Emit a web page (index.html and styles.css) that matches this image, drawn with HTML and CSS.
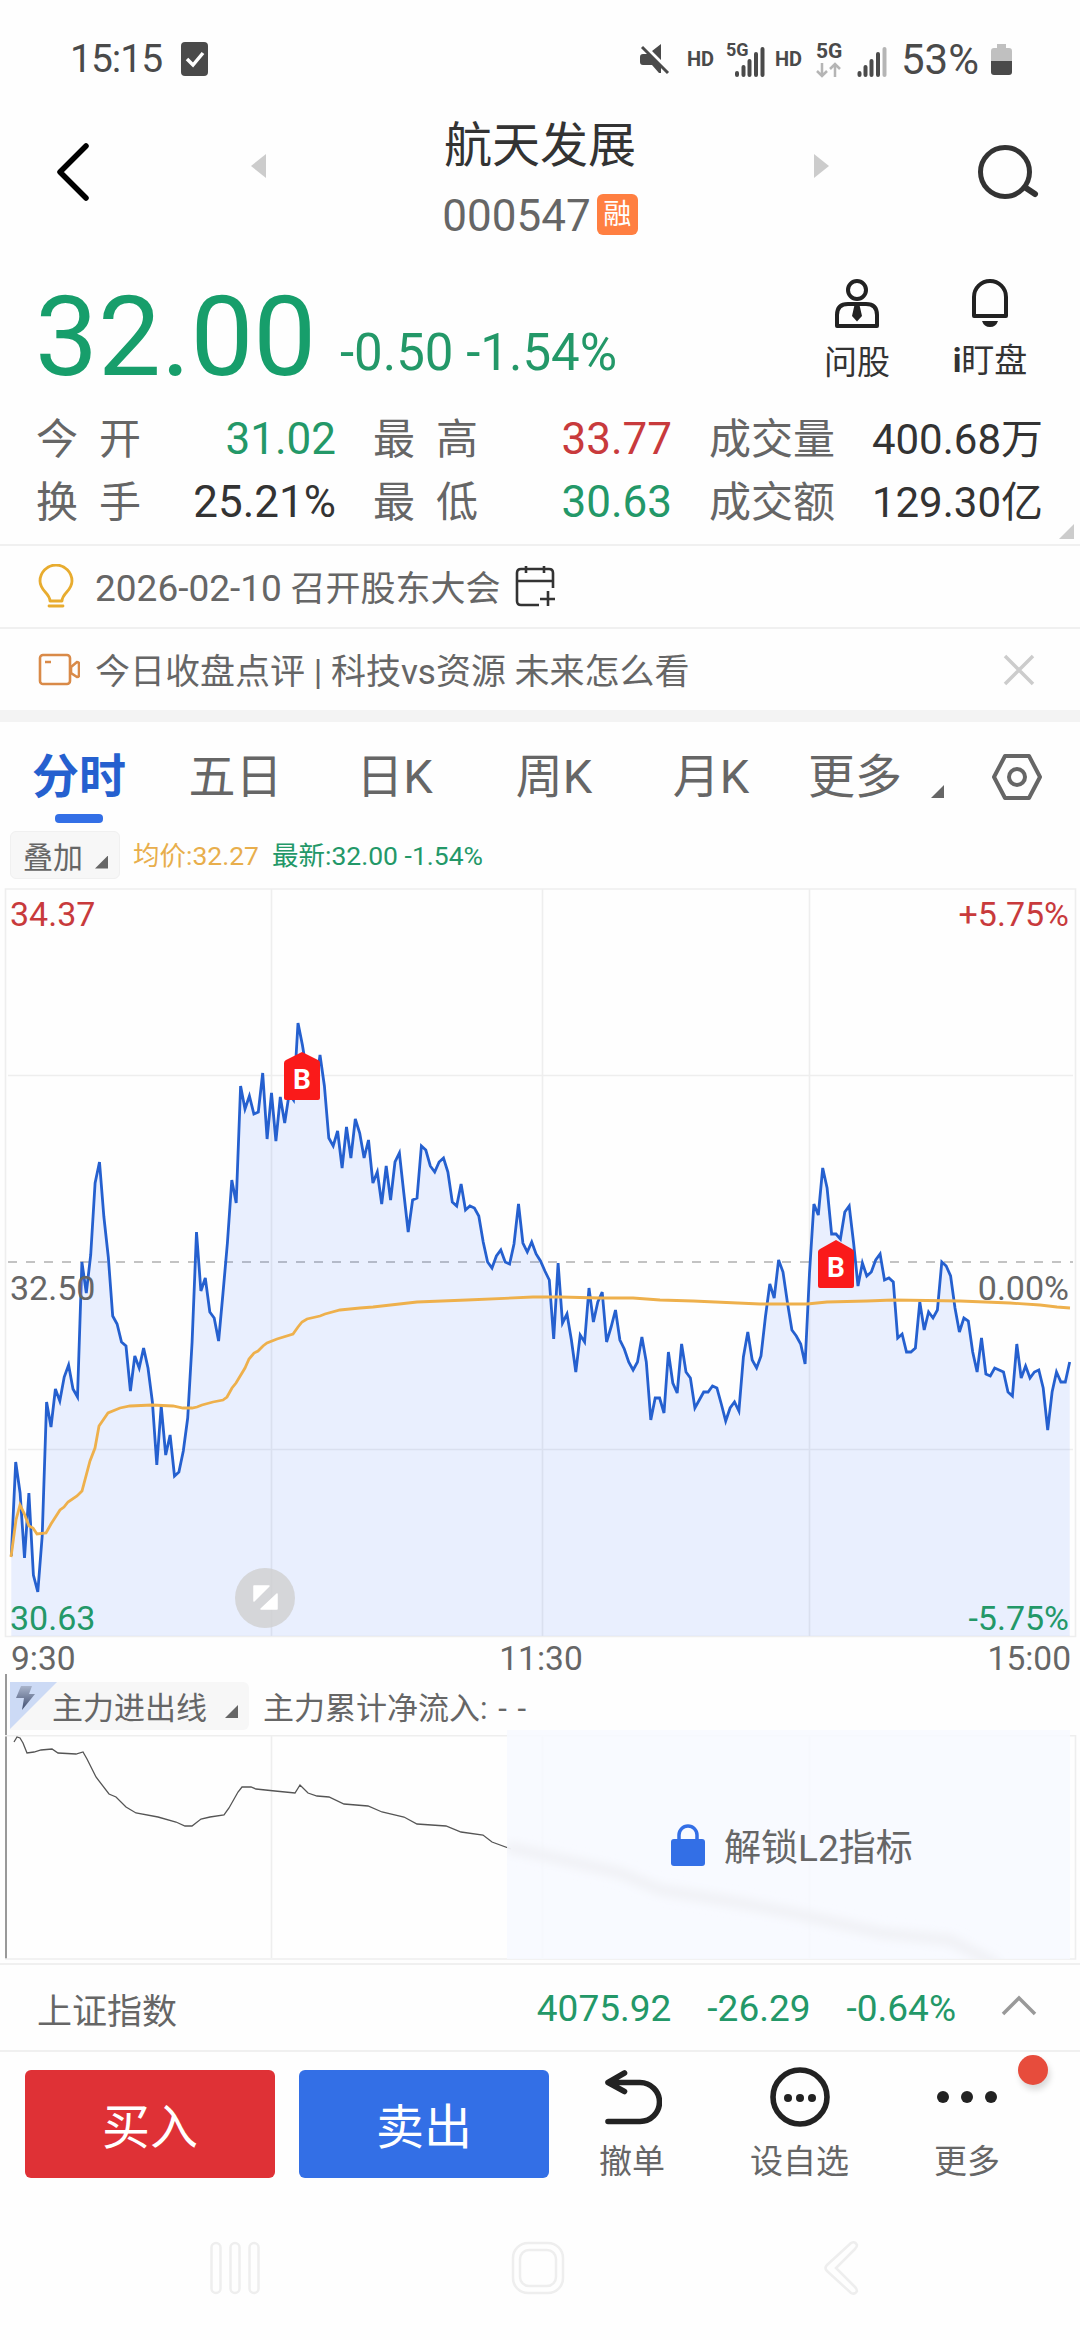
FILE: index.html
```html
<!DOCTYPE html>
<html lang="zh-CN">
<head>
    <meta charset="UTF-8">
    <meta name="viewport" content="width=device-width, initial-scale=1.0">
    <title>航天发展 000547</title>
    <link rel="stylesheet" href="styles.css">
</head>
<body>
    <div class="status-bar">
        <span class="clock">15:15</span>
        <svg class="task-icon" width="27" height="34" viewBox="0 0 27 34"><rect width="27" height="34" rx="4" fill="#4a4a4a"/><path d="M6 17l6 6 10-12" fill="none" stroke="#fff" stroke-width="3.500"/></svg>
        <svg class="status-icons" width="270" height="44" viewBox="636 36 270 44">
            <path d="M641 56q0-3 3-3h6l2 1 10 10v8h-2l-7-8h-9q-3 0-3-3zM653 50l9-7v16z" fill="#4a4a4a"/>
            <path d="M643 46l26 26" stroke="#4a4a4a" stroke-width="3"/>
            <text x="688" y="65" class="hd">HD</text>
            <text x="727" y="55" class="g-small">5G</text>
            <path d="M738 72v2M744.500 66v8M750.500 60v14M757 53v21M763.500 48v26" stroke="#4a4a4a" stroke-width="4" stroke-linecap="round"/>
            <text x="776" y="65" class="hd">HD</text>
            <text x="817" y="57" class="g-big">5G</text>
            <path d="M823 62v13M818 70l5 5 5-5M836 76V63M831 68l5-5 5 5" fill="none" stroke="#b5b5b5" stroke-width="2.500"/>
            <path d="M860.500 72v2M866.500 66v8M872.500 60v14M879 53v21" stroke="#4a4a4a" stroke-width="4" stroke-linecap="round"/>
            <path d="M885.500 48v26" stroke="#b5b5b5" stroke-width="4" stroke-linecap="round"/>
        </svg>
        <span class="battery-text">53%</span>
        <svg width="21" height="31" viewBox="0 0 21 31"><path d="M6 0h9v4h3q3 0 3 3v10H0V7q0-3 3-3h3z" fill="#c0c0c0"/><path d="M0 17h21v11q0 3-3 3H3q-3 0-3-3z" fill="#4a4a4a"/></svg>
    </div>

    <div class="header">
        <svg class="back" width="36" height="60" viewBox="0 0 36 60"><path d="M31 4L5 30l26 26" fill="none" stroke="#000" stroke-width="5.500" stroke-linecap="round" stroke-linejoin="round"/></svg>
        <span class="arrow-left"></span>
        <div class="stock">
            <div class="stock-name">航天发展</div>
            <div class="stock-code">000547<span class="badge">融</span></div>
        </div>
        <span class="arrow-right"></span>
        <svg class="search" width="64" height="60" viewBox="0 0 64 60"><circle cx="29" cy="30" r="24.500" fill="none" stroke="#333" stroke-width="5"/><path d="M50 46l9 6" stroke="#333" stroke-width="6" stroke-linecap="round"/></svg>
    </div>

    <div class="quote">
        <div class="price-row">
            <div class="price">32.00</div>
            <div class="change">-0.50 -1.54%</div>
            <div class="tool ask">
                <svg width="48" height="50" viewBox="0 0 48 50"><circle cx="24" cy="11" r="9" fill="none" stroke="#222" stroke-width="4"/><path d="M3 47V36q0-11 11-11h18q11 0 11 11v11z" transform="translate(1 0)" fill="none" stroke="#222" stroke-width="4" stroke-linejoin="round"/><path d="M21.500 26h5l2.500 11-5 5.500-5-5.500z" fill="#222"/></svg>
                <span>问股</span>
            </div>
            <div class="tool watch">
                <svg width="40" height="50" viewBox="0 0 40 50"><path d="M4 37V18a16 16 0 0 1 32 0v19z" fill="none" stroke="#222" stroke-width="4" stroke-linejoin="round"/><path d="M12 42h16q-2 6-8 6t-8-6z" fill="#222"/></svg>
                <span><b>i</b>盯盘</span>
            </div>
        </div>
        <div class="stats">
            <div class="stat"><span class="label wide">今开</span><span class="green">31.02</span></div>
            <div class="stat"><span class="label wide">最高</span><span class="red">33.77</span></div>
            <div class="stat"><span class="label">成交量</span><span class="amount">400.68万</span></div>
            <div class="stat"><span class="label wide">换手</span><span>25.21%</span></div>
            <div class="stat"><span class="label wide">最低</span><span class="green">30.63</span></div>
            <div class="stat"><span class="label">成交额</span><span class="amount">129.30亿</span></div>
        </div>
        <span class="corner"></span>
    </div>

    <div class="notice">
        <svg width="40" height="46" viewBox="0 0 40 46"><path d="M13 37c0-8-10-10-10-20a15 15 0 0 1 32 0c0 10-10 12-10 20zM12 42h14" transform="translate(-1 0)" fill="none" stroke="#e8ac2f" stroke-width="2.800" stroke-linecap="round" stroke-linejoin="round"/></svg>
        <span class="notice-text"><span class="date">2026-02-10</span> 召开股东大会</span>
        <svg class="calendar" width="42" height="44" viewBox="0 0 42 44"><path d="M24 40H6q-4 0-4-4V8q0-4 4-4h28q4 0 4 4v15M2 16h36M11 1v7M29 1v7M33 26v15M25 34h15" fill="none" stroke="#333" stroke-width="2.600"/></svg>
    </div>
    <div class="notice news">
        <svg width="42" height="34" viewBox="0 0 42 34"><rect x="2" y="2" width="30" height="29" rx="3" fill="none" stroke="#d98a48" stroke-width="2.600"/><path d="M7 9h6M33 14l6-5q2 0 2 2v11q0 2-2 2l-6-4z" fill="none" stroke="#d98a48" stroke-width="2.600"/></svg>
        <span class="notice-text">今日收盘点评 | 科技vs资源 未来怎么看</span>
        <svg class="close" width="32" height="32" viewBox="0 0 32 32"><path d="M2 2l28 28M30 2L2 30" stroke="#ccc" stroke-width="3.500"/></svg>
    </div>

    <div class="tabs">
        <span class="tab active">分时</span>
        <span class="tab">五日</span>
        <span class="tab">日K</span>
        <span class="tab">周K</span>
        <span class="tab">月K</span>
        <span class="tab">更多</span>
        <span class="tab-caret"><i class="caret"></i></span>
        <svg class="settings" width="52" height="48" viewBox="0 0 52 48"><path d="M14 3h24l11 21-11 21H14L3 24z" fill="none" stroke="#666" stroke-width="4" stroke-linejoin="round"/><circle cx="26" cy="24" r="8" fill="none" stroke="#666" stroke-width="4"/></svg>
    </div>

    <div class="legend">
        <span class="chip">叠加<i class="caret"></i></span>
        <span class="avg">均价:32.27</span>
        <span class="last">最新:32.00 -1.54%</span>
    </div>

    <div class="chart">
        <svg width="1080" height="750" viewBox="0 0 1080 750">
            <path d="M5.500 1H1075.500V748.500H5.500zM271.500 1V748M542.500 1V748M809.500 1V748M8 187.500H1073M8 561.500H1073" fill="none" stroke="#eee" stroke-width="1.600"/>
            <path d="M8 374H1073" stroke="#888" stroke-width="1.200" stroke-dasharray="9 9"/>
            <polygon id="priceArea" fill="#3370ff" fill-opacity="0.1"/>
            <polyline id="priceLine" fill="none" stroke="#2560cf" stroke-width="2.800"/>
            <polyline fill="none" stroke="#eeb04c" stroke-width="2.800" points="11,669 16,632 20,617 24,625 29,638 33,640 37,646 46,645 51,636 60,622 64,619 68,614 77,608 82,603 90,573 95,560 99,538 108,525 120,520 130,518 152,517 173,518 183,520 192,520 197,519 202,517 213,514 223,512 227,509 232,500 236,495 245,480 249,471 254,465 258,463 263,458 267,455 277,451 293,446 298,439 302,434 307,431 320,428 325,426 340,422 360,420 373,419 417,414 467,412 533,409 560,409 600,410 633,410 660,412 693,413 760,416 807,416 827,414 867,413 893,412 960,413 1010,415 1040,417 1057,419 1070,420"/>
            <g class="marker">
                <path d="M302 164l16 8q2 1 2 3v35q0 2-2 2h-32q-2 0-2-2v-35q0-2 2-3z"/>
                <text x="302" y="201">B</text>
                <path d="M836 352l16 9q2 1 2 3v34q0 2-2 2h-32q-2 0-2-2v-34q0-2 2-3z"/>
                <text x="836" y="389">B</text>
            </g>
            <circle cx="265" cy="710" r="30" fill="#cfcfcf" fill-opacity="0.8"/>
            <path d="M254 698h15l-15 15zM277 706v15h-16z" fill="#fff" stroke="#fff" stroke-width="1.500" stroke-linejoin="round"/>
        </svg>
        <span class="axis top left red">34.37</span>
        <span class="axis top right red">+5.75%</span>
        <span class="axis middle left">32.50</span>
        <span class="axis middle right">0.00%</span>
        <span class="axis bottom left green">30.63</span>
        <span class="axis bottom right green">-5.75%</span>
    </div>
    <div class="times"><span>9:30</span><span>11:30</span><span>15:00</span></div>

    <div class="flow">
        <div class="flow-head">
            <span class="flow-chip">
                <svg width="47" height="47" viewBox="0 0 47 47"><defs><linearGradient id="bolt" x1="0" y1="0" x2="0" y2="1"><stop offset="0" stop-color="#a9b4cb"/><stop offset="1" stop-color="#3e4c6e"/></linearGradient></defs><path d="M0 0h47L0 47z" fill="#ccdaf5"/><path d="M11 4h11l-3 8h6L12 28l2-12H6z" fill="url(#bolt)"/></svg>
                主力进出线<i class="caret"></i>
            </span>
            <span class="flow-text">主力累计净流入: - -</span>
        </div>
        <div class="flow-chart">
            <svg width="1080" height="225" viewBox="0 0 1080 225">
                <path d="M5 .800H1075.500V224H5M271.500 1V223M542.500 1V223M809.500 1V223" fill="none" stroke="#eee" stroke-width="1.600"/>
                <polyline fill="none" stroke="#555" stroke-width="1.300" points="14,7 17,2 20,3 23,8 27,18 34,17 41,15 52,14 58,18 76,19 83,17 87,24 96,42 109,59 116,62 126,72 136,78 158,82 176,87 185,91 192,91 201,84 210,82 224,80 229,73 238,57 242,52 251,52 256,54 275,56 295,58 300,50 308,58 317,61 329,62 344,69 368,71 382,77 404,82 417,89 446,91 461,97 483,100 492,107 511,114"/>
            </svg>
            <div class="locked">
                <svg class="trend" width="563" height="229" viewBox="507 -5 563 229"><defs><filter id="soft"><feGaussianBlur stdDeviation="5"/></filter></defs><polyline filter="url(#soft)" fill="none" stroke="#f0f1f5" stroke-width="11" points="507,112 560,124 620,138 661,155 740,168 792,178 882,198 950,205 998,230"/></svg>
                <svg width="34" height="43" viewBox="0 0 34 43"><path d="M8 18v-6a9 9 0 0 1 18 0v6" fill="none" stroke="#336fe6" stroke-width="3.500"/><rect y="16" width="34" height="27" rx="3" fill="#336fe6"/></svg>
                <span>解锁L2指标</span>
            </div>
        </div>
    </div>

    <div class="index-bar">
        <span class="index-name">上证指数</span>
        <span class="green">4075.92</span>
        <span class="green">-26.29</span>
        <span class="green">-0.64%</span>
        <svg width="36" height="22" viewBox="0 0 36 22"><path d="M2 19L18 3l16 16" fill="none" stroke="#999" stroke-width="3.500"/></svg>
    </div>

    <div class="trade-bar">
        <button class="buy">买入</button>
        <button class="sell">卖出</button>
        <div class="action cancel">
            <svg width="60" height="60" viewBox="0 0 60 60"><path d="M6 54.500h32a19.500 19.500 0 0 0 0-39H6M22.500 6L6 15.500l16.500 9" fill="none" stroke="#222" stroke-width="5.600" stroke-linecap="round" stroke-linejoin="round"/></svg>
            <span>撤单</span>
        </div>
        <div class="action custom">
            <svg width="60" height="60" viewBox="0 0 60 60"><circle cx="30" cy="30" r="27" fill="none" stroke="#222" stroke-width="5.600"/><circle cx="18" cy="31" r="4"/><circle cx="30" cy="31" r="4"/><circle cx="42" cy="31" r="4"/></svg>
            <span>设自选</span>
        </div>
        <div class="action more">
            <svg width="60" height="60" viewBox="0 0 60 60"><circle cx="6" cy="30" r="6"/><circle cx="30" cy="30" r="6"/><circle cx="54" cy="30" r="6"/></svg>
            <span>更多</span>
            <i class="dot"></i>
        </div>
    </div>

    <div class="nav-bar">
        <svg width="50" height="54" viewBox="0 0 50 54"><rect x="1.500" y="2" width="9" height="50" rx="4.500"/><rect x="20.500" y="2" width="9" height="50" rx="4.500"/><rect x="39.500" y="2" width="9" height="50" rx="4.500"/></svg>
        <svg class="home" width="54" height="54" viewBox="0 0 54 54"><rect x="2" y="2" width="50" height="50" rx="15"/><rect x="9" y="9" width="36" height="36" rx="9"/></svg>
        <svg width="36" height="56" viewBox="0 0 36 56"><path d="M28 3L4 25q-3 3 0 6l24 22q4 2 6-2 0-2-2-4L13 28 32 9q2-2 2-4-2-4-6-2z"/></svg>
    </div>

    <script src="chart.js"></script>
</body>
</html>
```

FILE: styles.css
```css
* {
    box-sizing: border-box;
}

body {
    margin: 0;
    width: 1080px;
    height: 2340px;
    overflow: hidden;
    display: flex;
    flex-direction: column;
    background-color: #fefefe;
    color: #666;
    font-family: Roboto, "Noto Sans CJK SC", sans-serif;
}

svg {
    display: block;
    flex: none;
}

.green {
    color: #239868;
}

.red {
    color: #c83a3c;
}

.caret {
    width: 13px;
    height: 13px;
    background-color: #666;
    clip-path: polygon(100% 0, 100% 100%, 0 100%);
}

/* status bar */
.status-bar {
    height: 118px;
    display: flex;
    align-items: center;
    padding: 0 68px 0 70px;
    color: #4a4a4a;
    font-size: 39px;
}

.clock {
    width: 111px;
    letter-spacing: -1px;
}

.status-icons {
    margin-left: auto;
}

.status-icons text {
    fill: #4a4a4a;
    font-weight: bold;
}

.hd {
    font-size: 20px;
}

.g-small {
    font-size: 18px;
}

.g-big {
    font-size: 21px;
}

.battery-text {
    width: 85px;
    margin-left: -4px;
    margin-right: 5px;
    font-size: 42px;
    white-space: nowrap;
}

/* stock title */
.header {
    height: 142px;
    display: flex;
    align-items: flex-start;
    padding-left: 55px;
}

.back {
    margin-top: 24px;
}

.arrow-left,
.arrow-right {
    width: 15px;
    height: 24px;
    margin-top: 36px;
    background-color: #ccc;
}

.arrow-left {
    margin-left: 160px;
    clip-path: polygon(100% 0, 100% 100%, 0 50%);
}

.arrow-right {
    clip-path: polygon(0 0, 100% 50%, 0 100%);
}

.stock {
    width: 548px;
    display: flex;
    flex-direction: column;
    align-items: center;
}

.stock-name {
    color: #333;
    font-size: 48px;
    line-height: 56px;
}

.stock-code {
    display: flex;
    align-items: center;
    margin-top: 19px;
    font-size: 44px;
    line-height: 46px;
}

.badge {
    width: 41px;
    height: 41px;
    margin: -4px 0 0 6px;
    border-radius: 6px;
    background-color: #ff7f41;
    color: #fff;
    font-size: 28px;
    line-height: 41px;
    text-align: center;
}

.search {
    margin: 24px 0 0 147px;
}

/* quote */
.quote {
    position: relative;
    height: 286px;
    border-bottom: 2px solid #f0f0f0;
}

.price-row {
    height: 148px;
    display: flex;
    padding-left: 35px;
}

.price {
    width: 305px;
    color: #179e6b;
    font-size: 112px;
    line-height: 154px;
}

.change {
    width: 484px;
    color: #239868;
    font-size: 51px;
    line-height: 186px;
}

.tool {
    display: flex;
    flex-direction: column;
    align-items: center;
    padding-top: 19px;
    color: #333;
    font-size: 33px;
    line-height: 40px;
}

.tool span {
    margin-top: 14px;
}

.ask {
    width: 66px;
}

.watch {
    width: 80px;
    margin-left: 60px;
}

.watch span {
    margin-top: 12px;
}

.stats {
    display: grid;
    grid-template-columns: 300px 299px 334px;
    grid-auto-rows: 63px;
    column-gap: 37px;
    padding-left: 36px;
}

.stat {
    display: flex;
    justify-content: space-between;
    color: #333;
    font-size: 44px;
    line-height: 63px;
}

.stat .green {
    color: #239868;
}

.stat .red {
    color: #c83a3c;
}

.stat .label {
    color: #666;
    font-size: 42px;
}

.stat .wide {
    letter-spacing: 21px;
}

.stat .amount {
    font-size: 42px;
}

.corner {
    position: absolute;
    right: 6px;
    bottom: 5px;
    width: 15px;
    height: 15px;
    background-color: #ccc;
    clip-path: polygon(100% 0, 100% 100%, 0 100%);
}

/* notices */
.notice {
    height: 83px;
    display: flex;
    align-items: center;
    padding: 0 45px 0 38px;
    border-bottom: 2px solid #f0f0f0;
    font-size: 35px;
}

.notice-text {
    margin: -3px 0 0 17px;
}

.date {
    font-size: 37px;
}

.calendar {
    margin-left: 14px;
}

.news {
    height: 93px;
    border-bottom: 12px solid #f3f3f3;
}

.news .notice-text {
    margin-left: 15px;
}

.close {
    margin-left: auto;
}

/* period tabs */
.tabs {
    height: 103px;
    display: grid;
    grid-template-columns: 158px 155px 163px 156px 158px 130px 35px 125px;
    align-items: center;
}

.tab {
    position: relative;
    font-size: 47px;
    line-height: 109px;
    text-align: center;
}

.tab.active {
    color: #2560cf;
    font-weight: bold;
}

.tab.active::after {
    content: "";
    position: absolute;
    left: 55px;
    bottom: 8px;
    width: 48px;
    height: 9px;
    border-radius: 4px;
    background-color: #336fe6;
}

.tab-caret {
    display: flex;
    padding: 30px 0 0 11px;
}

.settings {
    margin-left: 36px;
}

/* chart legend */
.legend {
    height: 63px;
    display: flex;
    align-items: center;
    padding: 0 0 3px 10px;
    font-size: 26.5px;
}

.chip {
    width: 110px;
    height: 48px;
    display: flex;
    align-items: center;
    margin-right: 13px;
    padding-left: 12px;
    border: 1px solid #f0f0f0;
    border-radius: 6px;
    background-color: #f7f7f7;
    font-size: 30px;
}

.chip .caret {
    margin: 14px 0 0 12px;
}

.avg,
.last {
    margin-top: -3px;
}

.avg {
    width: 139px;
    color: #e8ae4c;
}

.last {
    color: #239868;
}

/* intraday chart */
.chart {
    position: relative;
    height: 750px;
}

.axis {
    position: absolute;
    font-size: 34px;
    line-height: 40px;
}

.left {
    left: 10px;
}

.right {
    right: 11px;
}

.top {
    top: 6px;
}

.middle {
    top: 380px;
}

.bottom {
    top: 710px;
}

.marker path {
    fill: #fa1a1a;
}

.marker text {
    fill: #fff;
    font-size: 28px;
    font-weight: bold;
    text-anchor: middle;
}

.times {
    height: 36px;
    display: grid;
    grid-template-columns: 1fr auto 1fr;
    padding: 0 9px 0 11px;
    font-size: 33.5px;
    line-height: 42px;
}

.times span:last-child {
    text-align: right;
}

/* main capital flow */
.flow {
    height: 285px;
    margin-left: 5px;
    border-left: 2px solid #999;
}

.flow-head {
    height: 61px;
    display: flex;
    align-items: center;
    padding: 2px 0 0 3px;
    font-size: 31px;
}

.flow-chip {
    position: relative;
    width: 239px;
    height: 48px;
    display: flex;
    align-items: center;
    padding-left: 42px;
    border-radius: 0 6px 6px 0;
    background-color: #f7f7f7;
}

.flow-chip svg {
    position: absolute;
    left: 0;
    top: 0;
}

.flow-chip .caret {
    margin: 12px 0 0 18px;
}

.flow-text {
    margin-left: 14px;
    word-spacing: 3px;
}

.flow-chart {
    position: relative;
    width: 1080px;
    margin-left: -7px;
}

.locked {
    position: absolute;
    left: 507px;
    top: -5px;
    width: 563px;
    height: 229px;
    display: flex;
    align-items: center;
    padding-left: 164px;
    background-color: rgba(247, 249, 255, 0.85);
    font-size: 37px;
}

.locked .trend {
    position: absolute;
    left: 0;
    top: 0;
}

.locked span {
    position: relative;
    margin-left: 19px;
}

/* index summary */
.index-bar {
    height: 89px;
    display: flex;
    align-items: center;
    margin-top: 4px;
    padding: 2px 43px 0 37px;
    border-top: 2px solid #f0f0f0;
    border-bottom: 2px solid #f0f0f0;
    font-size: 37px;
}

.index-name {
    margin-right: auto;
    font-size: 35px;
}

.index-bar .green {
    margin-right: 36px;
}

.index-bar svg {
    margin: 0 0 6px 9px;
}

/* trade buttons */
.trade-bar {
    height: 138px;
    display: flex;
    padding: 18px 0 0 25px;
}

.trade-bar button {
    width: 250px;
    height: 108px;
    margin-right: 24px;
    padding-bottom: 4px;
    border: none;
    border-radius: 6px;
    color: #fff;
    font-family: inherit;
    font-size: 48px;
}

.buy {
    background-color: #df3136;
}

.sell {
    background-color: #336fe6;
}

.action {
    position: relative;
    display: flex;
    flex-direction: column;
    align-items: center;
    margin-top: -3px;
    font-size: 33px;
    line-height: 40px;
}

.action svg {
    fill: #222;
}

.action span {
    margin-top: 15px;
}

.cancel {
    width: 118px;
}

.custom {
    width: 217px;
}

.more {
    width: 118px;
}

.dot {
    position: absolute;
    left: 110px;
    top: -12px;
    width: 30px;
    height: 30px;
    border-radius: 50%;
    background-color: #e74c3c;
    box-shadow: 2px 5px 6px rgba(0, 0, 0, 0.15);
}

/* system navigation */
.nav-bar {
    flex: 1;
    display: flex;
    align-items: center;
    justify-content: space-between;
    padding: 6px 221px 0 210px;
}

.nav-bar svg {
    fill: none;
    stroke: #eee;
    stroke-width: 2.5;
}

.nav-bar .home {
    margin-right: 7px;
}
```

FILE: chart.js
```js
// one value per trading minute, in chart pixels from the top edge
const minutes = [
    668, 574, 605, 670, 605, 687, 704, 648, 514, 539, 501, 513, 489, 477, 501, 509,
    374, 405, 367, 295, 274, 329, 369, 428, 436, 454, 458, 503, 468, 480, 460, 480,
    514, 577, 518, 567, 547, 588, 584, 563, 530, 454, 344, 403, 390, 424, 430, 453,
    405, 355, 292, 315, 198, 221, 208, 226, 224, 185, 251, 205, 253, 209, 235, 206,
    212, 135, 157, 184, 201, 201, 167, 198, 250, 258, 243, 280, 239, 270, 231, 245,
    270, 252, 295, 284, 316, 278, 312, 274, 265, 305, 344, 312, 310, 258, 262, 278,
    284, 274, 270, 284, 314, 318, 296, 322, 318, 320, 328, 354, 374, 380, 368, 362,
    374, 376, 356, 316, 355, 364, 354, 366, 373, 383, 392, 451, 375, 435, 426, 452,
    484, 447, 454, 400, 434, 414, 404, 454, 439, 422, 452, 461, 474, 482, 474, 449,
    474, 532, 510, 510, 525, 464, 495, 505, 456, 484, 490, 520, 512, 504, 504, 498,
    500, 516, 533, 520, 514, 523, 469, 444, 472, 480, 468, 429, 396, 410, 372, 384,
    415, 442, 448, 456, 476, 385, 316, 327, 280, 300, 346, 346, 351, 324, 318, 355,
    398, 375, 388, 384, 372, 366, 392, 390, 394, 450, 446, 464, 464, 460, 414, 442,
    424, 430, 422, 374, 378, 388, 420, 444, 430, 433, 464, 484, 450, 486, 488, 480,
    482, 484, 504, 508, 456, 490, 478, 490, 484, 482, 500, 542, 504, 484, 494, 494,
    474
];

const startX = 11.3;
const step = 4.41;
const points = minutes.map((y, i) => `${(startX + i * step).toFixed(1)},${y}`).join(' ');

document.getElementById('priceLine').setAttribute('points', points);
document.getElementById('priceArea').setAttribute('points', `${startX},748 ${points} 1069.7,748`);
```
